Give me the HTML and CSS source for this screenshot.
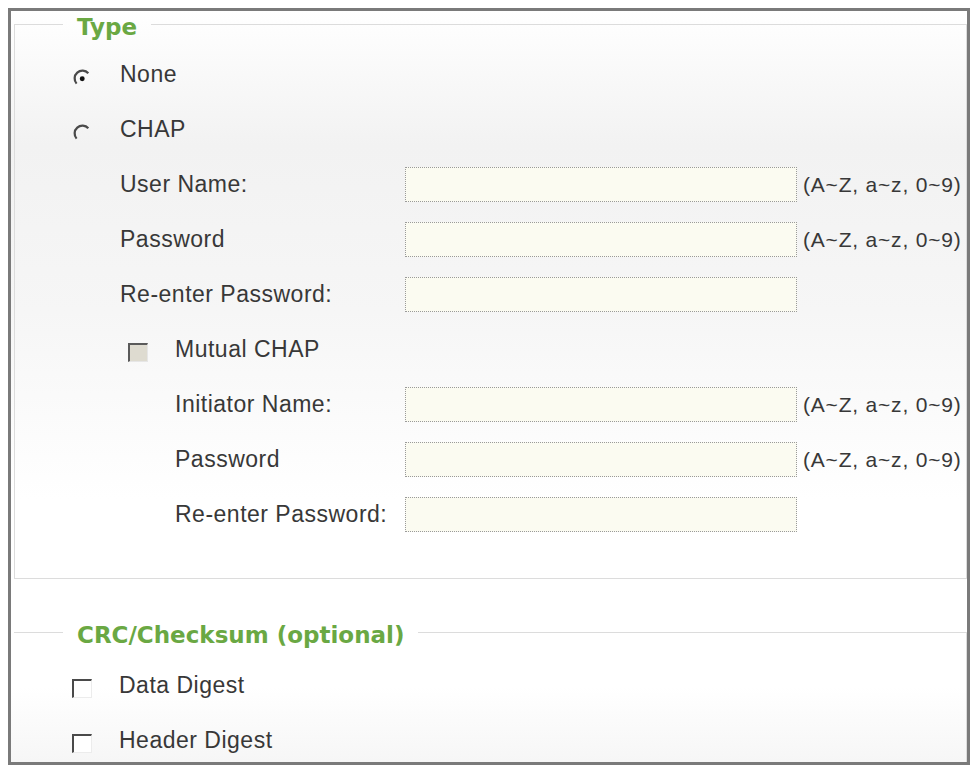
FILE: index.html
```html
<!DOCTYPE html>
<html lang="en">
<head>
  <meta charset="UTF-8">
  <title>iSCSI Authentication</title>
  <link rel="stylesheet" href="styles.css">
</head>
<body>
  <div class="frame">
    <fieldset class="group">
      <legend>Type</legend>
      <div class="row">
        <span class="ctl"><svg class="radio" viewBox="0 0 16 16"><path d="M3.2 13 A6.4 6.4 0 0 1 13.6 3.8" fill="none" stroke="#4a4a4a" stroke-width="2"/><circle cx="8.2" cy="8.6" r="2.2" fill="#111"/></svg></span>
        <span class="text">None</span>
      </div>
      <div class="row">
        <span class="ctl"><svg class="radio" viewBox="0 0 16 16"><path d="M3.2 13 A6.4 6.4 0 0 1 13.6 3.8" fill="none" stroke="#4a4a4a" stroke-width="2"/></svg></span>
        <span class="text">CHAP</span>
      </div>
      <div class="row field">
        <label class="text">User Name:</label>
        <input class="box" type="text">
        <span class="hint">(A~Z, a~z, 0~9)</span>
      </div>
      <div class="row field">
        <label class="text">Password</label>
        <input class="box" type="password">
        <span class="hint">(A~Z, a~z, 0~9)</span>
      </div>
      <div class="row field">
        <label class="text">Re-enter Password:</label>
        <input class="box" type="password">
      </div>
      <div class="row nested">
        <span class="ctl"><span class="check off"></span></span>
        <span class="text">Mutual CHAP</span>
      </div>
      <div class="row field sub">
        <label class="text">Initiator Name:</label>
        <input class="box" type="text">
        <span class="hint">(A~Z, a~z, 0~9)</span>
      </div>
      <div class="row field sub">
        <label class="text">Password</label>
        <input class="box" type="password">
        <span class="hint">(A~Z, a~z, 0~9)</span>
      </div>
      <div class="row field sub">
        <label class="text">Re-enter Password:</label>
        <input class="box" type="password">
      </div>
    </fieldset>

    <fieldset class="group crc">
      <legend>CRC/Checksum (optional)</legend>
      <div class="row">
        <span class="ctl"><span class="check"></span></span>
        <span class="text">Data Digest</span>
      </div>
      <div class="row">
        <span class="ctl"><span class="check"></span></span>
        <span class="text">Header Digest</span>
      </div>
    </fieldset>
  </div>
</body>
</html>
```

FILE: styles.css
```css
body {
  margin: 0;
  background: #fff;
  font-family: "Liberation Sans", Arial, sans-serif;
  color: #383838;
}
.frame {
  margin: 8px 0 0 8px;
  width: 962px;
  height: 757px;
  box-sizing: border-box;
  border: 3px solid #7a7a7a;
  overflow: hidden;
  background: linear-gradient(#fff 0, #f2f2f2 18%, #f6f6f6 40%, #fff 65%, #fff 90%, #f6f6f6 100%);
}
.group {
  margin: 0 0 0 3px;
  padding: 10px 0 36px 0;
  border: 1px solid #dcdcdc;
  min-width: 0;
}
.group legend {
  position: relative;
  top: 3px;
  margin-left: 48px;
  padding: 0 14px;
  font-family: "DejaVu Sans", Verdana, sans-serif;
  font-weight: bold;
  font-size: 23px;
  line-height: 26px;
  color: #6aa843;
}
.crc {
  margin-top: 40px;
  padding-top: 13px;
  border-left: none;
}
.crc legend {
  margin-left: 49px;
}
.row {
  display: flex;
  align-items: center;
  height: 55px;
  padding-left: 58px;
}
.ctl {
  width: 47px;
  display: flex;
  align-items: center;
}
.text {
  font-size: 23px;
  letter-spacing: 0.5px;
}
.radio {
  width: 18px;
  height: 18px;
  margin: 6px 0 0 0;
}
.check {
  display: block;
  width: 20px;
  height: 19px;
  box-sizing: border-box;
  border-top: 2px solid #4a4a4a;
  border-left: 2px solid #4a4a4a;
  border-right: 1px solid #ececec;
  border-bottom: 1px solid #ececec;
  background: #fff;
  margin-top: 6px;
}
.check.off {
  background: #dedbd0;
  border-color: #5a5a5a #e6e6e6 #e6e6e6 #5a5a5a;
}
.nested {
  padding-left: 113px;
}
.field {
  padding-left: 105px;
}
.field label {
  width: 285px;
}
.field.sub {
  padding-left: 160px;
}
.field.sub label {
  width: 230px;
}
.box {
  width: 392px;
  height: 35px;
  box-sizing: border-box;
  margin: 0;
  border: 1px dotted #9a9a9a;
  background: #fbfbf1;
}
.hint {
  margin-left: 6px;
  font-size: 21px;
  letter-spacing: 0.8px;
}
```
